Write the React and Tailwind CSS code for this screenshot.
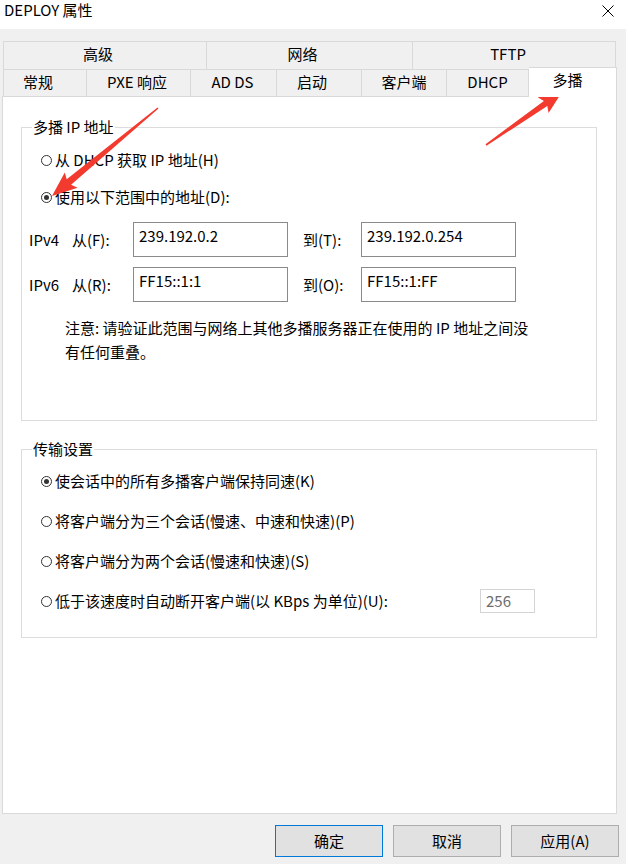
const row1 = [
  { label: "高级", w: "w-[204px] pr-[14px]" },
  { label: "网络", w: "w-[206px] pr-[14px]" },
  { label: "TFTP", w: "w-[203px] pr-[12px]" },
];

const row2 = [
  { label: "常规", w: "w-[84px] pr-[14px]" },
  { label: "PXE 响应", w: "w-[104px] pr-[3px]" },
  { label: "AD DS", w: "w-[86px] pr-[2px]" },
  { label: "启动", w: "w-[85px] pr-[14px]" },
  { label: "客户端", w: "w-[85px]" },
  { label: "DHCP", w: "w-[82px]" },
];

function Radio({ checked, children, className = "" }) {
  return (
    <div className={"flex items-center h-[20px] leading-[20px] text-[15px] " + className}>
      <span className="w-[11px] h-[11px] rounded-full border border-[#333333] bg-white flex items-center justify-center shrink-0">
        {checked && <span className="w-[5px] h-[5px] rounded-full bg-[#333333]" />}
      </span>
      <span className="ml-[3px] whitespace-nowrap">{children}</span>
    </div>
  );
}

function TextBox({ value }) {
  return (
    <div className="w-[155px] h-[35px] border border-[#8a8a8a] bg-white pl-[5px] pt-[3px] text-[15px] leading-[20px] whitespace-nowrap">
      {value}
    </div>
  );
}

function GroupBox({ title, className = "", children }) {
  return (
    <div className={"relative w-[576px] border border-[#dcdcdc] " + className}>
      <span className="absolute left-[10px] top-[-11px] bg-white px-[1px] text-[15px] leading-[20px] whitespace-nowrap">
        {title}
      </span>
      {children}
    </div>
  );
}

export default function App() {
  return (
    <div className="relative w-[626px] h-[864px] bg-[#f0f0f0] overflow-hidden text-black font-['Noto_Sans_CJK_SC',sans-serif]">
      {/* Title bar */}
      <div className="h-[29px] bg-white flex items-start justify-between pl-[4px] pr-[12px]">
        <span className="text-[15px] leading-[20px]">DEPLOY 属性</span>
        <svg className="mt-[5px]" width="12" height="12" viewBox="0 0 12 12">
          <path d="M0.5 0.5L11.5 11.5M11.5 0.5L0.5 11.5" stroke="#000" strokeWidth="1" fill="none" />
        </svg>
      </div>

      {/* Tabs */}
      <div className="mt-[12px] ml-[3px] flex flex-col">
        <div className="flex h-[28px]">
          {row1.map((t, i) => (
            <div
              key={t.label}
              className={
                t.w +
                " h-[28px] pb-[3px] border-t border-r border-[#d9d9d9] flex items-center justify-center text-[15px] leading-[20px] " +
                (i === 0 ? "border-l" : "")
              }
            >
              {t.label}
            </div>
          ))}
        </div>
        <div className="flex h-[27px]">
          {row2.map((t, i) => (
            <div
              key={t.label}
              className={
                t.w +
                " h-[27px] pb-[2px] border-t border-r border-[#d9d9d9] flex items-center justify-center text-[15px] leading-[20px] " +
                (i === 0 ? "border-l" : "")
              }
            >
              {t.label}
            </div>
          ))}
          <div className="relative z-10 -mt-[2px] w-[88px] h-[30px] bg-white border-t border-r border-[#d9d9d9] flex items-start justify-center pt-[2px] pr-[10px] text-[15px] leading-[20px]">
            多播
          </div>
        </div>
      </div>

      {/* Panel */}
      <div className="ml-[2px] w-[615px] h-[718px] bg-white border border-[#d9d9d9] pt-[30px] pl-[18px]">
        <GroupBox title="多播 IP 地址" className="h-[294px]">
          <div className="flex flex-col pt-[22px]">
            <Radio className="pl-[19px]">从 DHCP 获取 IP 地址(H)</Radio>
            <Radio checked className="pl-[19px] mt-[17px]">使用以下范围中的地址(D):</Radio>

            <div className="flex items-center pl-[7px] mt-[15px] text-[15px] leading-[20px]">
              <span className="w-[43px]">IPv4</span>
              <span className="w-[61px]">从(F):</span>
              <TextBox value="239.192.0.2" />
              <span className="ml-[15px] w-[58px]">到(T):</span>
              <TextBox value="239.192.0.254" />
            </div>
            <div className="flex items-center pl-[7px] mt-[10px] text-[15px] leading-[20px]">
              <span className="w-[43px]">IPv6</span>
              <span className="w-[61px]">从(R):</span>
              <TextBox value="FF15::1:1" />
              <span className="ml-[15px] w-[58px]">到(O):</span>
              <TextBox value="FF15::1:FF" />
            </div>

            <div className="pl-[43px] mt-[14px] text-[15px] leading-[24px]">
              <div className="whitespace-nowrap">注意: 请验证此范围与网络上其他多播服务器正在使用的 IP 地址之间没</div>
              <div className="whitespace-nowrap">有任何重叠。</div>
            </div>
          </div>
        </GroupBox>

        <GroupBox title="传输设置" className="h-[189px] mt-[28px]">
          <div className="flex flex-col pt-[21px]">
            <Radio checked className="pl-[19px]">使会话中的所有多播客户端保持同速(K)</Radio>
            <Radio className="pl-[19px] mt-[20px]">将客户端分为三个会话(慢速、中速和快速)(P)</Radio>
            <Radio className="pl-[19px] mt-[20px]">将客户端分为两个会话(慢速和快速)(S)</Radio>
            <div className="flex items-center pl-[19px] pr-[61px] mt-[18px] h-[24px]">
              <Radio>低于该速度时自动断开客户端(以 KBps 为单位)(U):</Radio>
              <div className="ml-auto w-[55px] h-[24px] border border-[#d4d4d4] bg-white pl-[5px] text-[15px] leading-[22px] text-[#6d6d6d]">
                256
              </div>
            </div>
          </div>
        </GroupBox>
      </div>

      {/* Buttons */}
      <div className="mt-[11px] flex justify-end gap-[10px] pr-[7px]">
        <button className="w-[108px] h-[32px] bg-[#e1e1e1] border border-[#0078d7] text-[15px] leading-[20px]">确定</button>
        <button className="w-[108px] h-[32px] bg-[#e1e1e1] border border-[#adadad] text-[15px] leading-[20px]">取消</button>
        <button className="w-[108px] h-[32px] bg-[#e1e1e1] border border-[#adadad] text-[15px] leading-[20px]">应用(A)</button>
      </div>

      {/* Annotation arrows */}
      <svg className="absolute left-0 top-0 pointer-events-none" width="626" height="864" viewBox="0 0 626 864">
        <polygon
          fill="#f23b2e"
          points="158.5,108.6 71.1,184.7 77.6,187.8 52,196 64.8,172.4 66.7,179.3 157.5,107.4"
        />
        <polygon
          fill="#f23b2e"
          points="486.5,145.7 547.3,105.9 548.6,112.9 562,92 537.7,97.3 543.9,100.9 485.5,144.3"
        />
      </svg>
    </div>
  );
}
